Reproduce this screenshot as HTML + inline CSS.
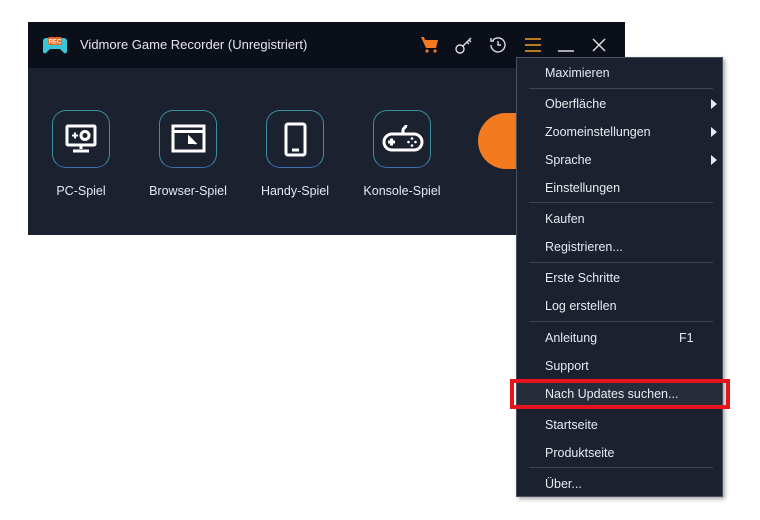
<!DOCTYPE html>
<html><head><meta charset="utf-8"><style>
*{margin:0;padding:0;box-sizing:border-box}
body{width:760px;height:520px;background:#fff;position:relative;overflow:hidden;font-family:"Liberation Sans","DejaVu Sans",sans-serif}
.win{position:absolute;left:28px;top:22px;width:597px;height:213px;background:#1c2130}
.title{position:absolute;left:0;top:0;width:597px;height:46px;background:#0b0f19}
.tt{position:absolute;left:52px;top:15px;color:#e6e8ee;font-size:13px}
.tile{position:absolute;top:88px;width:58px;height:58px;border-radius:14px;border:1.5px solid #3a8fa0;border-bottom-color:#3a6fb0;background:#1c2130}
.lbl{position:absolute;top:162px;color:#e6e8ee;font-size:12.5px;text-align:center;width:100px}
.orange{position:absolute;left:478px;top:113px;width:90px;height:56px;border-radius:45px 0 0 45px;background:#f47a1f}
.menu{position:absolute;left:516px;top:57px;width:207px;height:440px;background:#1c2130;border:1px solid #4a505e;box-shadow:2px 2px 4px rgba(0,0,0,.35)}
.it{position:absolute;left:28px;color:#e8eaef;font-size:12.5px;line-height:16px}
.sep{position:absolute;left:12px;width:184px;height:1px;background:#3d4556}
.arr{position:absolute;right:5px;width:0;height:0;border-left:6px solid #e8eaef;border-top:5px solid transparent;border-bottom:5px solid transparent}
.red{position:absolute;left:510px;top:379px;width:220px;height:30px;border:4px solid #e8141c}
</style></head><body>
<div class="win">
 <div class="title">
  <svg style="position:absolute;left:14px;top:12px" width="26" height="22" viewBox="0 0 26 22"><path d="M4 4h18a3 3 0 0 1 3 3v11a2 2 0 0 1-3 1l-4-4H8l-4 4a2 2 0 0 1-3-1V7a3 3 0 0 1 3-3z" fill="#38c6d8"/><rect x="6" y="3" width="14" height="8" rx="2" fill="#e8651d"/><text x="13" y="9.5" font-size="6" fill="#fff" text-anchor="middle" font-family="Liberation Sans" font-weight="bold">REC</text></svg>
  <div class="tt">Vidmore Game Recorder (Unregistriert)</div>
  <svg style="position:absolute;left:392px;top:14px" width="20" height="18" viewBox="0 0 20 18"><path d="M1 1h3l1 3h13l-2 8H6z" fill="#f47a1f"/><circle cx="7" cy="15" r="1.6" fill="#f47a1f"/><circle cx="15" cy="15" r="1.6" fill="#f47a1f"/></svg>
  <svg style="position:absolute;left:426px;top:13px" width="20" height="20" viewBox="0 0 20 20" fill="none" stroke="#ddd" stroke-width="1.4"><circle cx="6" cy="14" r="4"/><path d="M9 11l8-8M13 7l2 2M15 5l2 2"/></svg>
  <svg style="position:absolute;left:460px;top:13px" width="20" height="20" viewBox="0 0 20 20" fill="none" stroke="#ddd" stroke-width="1.4"><path d="M3 10a7 7 0 1 0 2-5M3 3v3h3M10 6v4h3"/></svg>
  <svg style="position:absolute;left:496px;top:15px" width="18" height="16" viewBox="0 0 18 16" stroke="#f0a020" stroke-width="1.5"><path d="M1 2h16M1 8h16M1 14h16"/></svg>
  <svg style="position:absolute;left:529px;top:15px" width="18" height="16" viewBox="0 0 18 16" stroke="#ddd" stroke-width="1.5"><path d="M1 14h16"/></svg>
  <svg style="position:absolute;left:563px;top:15px" width="16" height="16" viewBox="0 0 16 16" stroke="#ddd" stroke-width="1.5"><path d="M2 2l12 12M14 2L2 14"/></svg>
 </div>
 <div class="tile" style="left:24px"><svg width="58" height="58" viewBox="0 0 58 58" fill="none" stroke="#fff" stroke-width="3"><rect x="14" y="15" width="28" height="19" rx="1"/><path d="M28 34v4M20 40h16"/><circle cx="32" cy="24.5" r="4"/><path d="M19 24.5h6M22 21.5v6" stroke-width="2"/></svg></div>
 <div class="tile" style="left:131px"><svg width="58" height="58" viewBox="0 0 58 58" fill="none" stroke="#fff" stroke-width="3"><rect x="13" y="15" width="31" height="25"/><path d="M13 20.5h31"/><path d="M29 26l7 7M29 26v6h6z" fill="#fff" stroke-width="2"/></svg></div>
 <div class="tile" style="left:238px"><svg width="58" height="58" viewBox="0 0 58 58" fill="none" stroke="#fff" stroke-width="3"><rect x="19" y="13" width="19" height="31" rx="2"/><path d="M25 39h7"/></svg></div>
 <div class="tile" style="left:345px"><svg width="58" height="58" viewBox="0 0 58 58" fill="none" stroke="#fff" stroke-width="3"><path d="M18 23h22a8 8 0 0 1 0 16H18a8 8 0 0 1 0-16zM29 23v-4c0-2 3-2 3-5" /><path d="M14 31h7M17.5 27.5v7"/><g fill="#fff" stroke="none"><circle cx="38" cy="27.5" r="1.3"/><circle cx="38" cy="34.5" r="1.3"/><circle cx="34.5" cy="31" r="1.3"/><circle cx="41.5" cy="31" r="1.3"/></g></svg></div>
 <div class="lbl" style="left:3px">PC-Spiel</div>
 <div class="lbl" style="left:110px">Browser-Spiel</div>
 <div class="lbl" style="left:217px">Handy-Spiel</div>
 <div class="lbl" style="left:324px">Konsole-Spiel</div>
</div>
<div class="orange"></div>
<div class="menu">
 <div class="it" style="top:7px">Maximieren</div>
 <div class="sep" style="top:30px"></div>
 <div class="it" style="top:38px">Oberfläche</div><div class="arr" style="top:41px"></div>
 <div class="it" style="top:66px">Zoomeinstellungen</div><div class="arr" style="top:69px"></div>
 <div class="it" style="top:94px">Sprache</div><div class="arr" style="top:97px"></div>
 <div class="it" style="top:122px">Einstellungen</div>
 <div class="sep" style="top:144px"></div>
 <div class="it" style="top:153px">Kaufen</div>
 <div class="it" style="top:181px">Registrieren...</div>
 <div class="sep" style="top:204px"></div>
 <div class="it" style="top:212px">Erste Schritte</div>
 <div class="it" style="top:240px">Log erstellen</div>
 <div class="sep" style="top:263px"></div>
 <div class="it" style="top:272px">Anleitung</div><div class="it" style="top:272px;left:162px">F1</div>
 <div class="it" style="top:300px">Support</div>
 <div style="position:absolute;left:0;top:322px;width:205px;height:28px;background:#262c3a"></div>
 <div class="it" style="top:328px">Nach Updates suchen...</div>
 <div class="it" style="top:359px">Startseite</div>
 <div class="it" style="top:387px">Produktseite</div>
 <div class="sep" style="top:409px"></div>
 <div class="it" style="top:418px">Über...</div>
</div>
<div class="red"></div>
</body></html>
